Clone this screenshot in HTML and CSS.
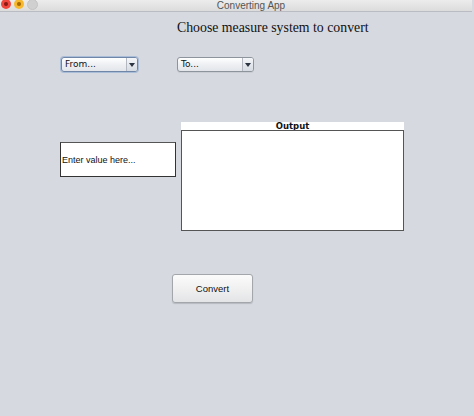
FILE: index.html
```html
<!DOCTYPE html>
<html>
<head>
<meta charset="utf-8">
<link rel="stylesheet" href="styles.css">
</head>
<body>
<div class="window">
  <div class="titlebar">
    <div class="lights">
      <span class="light red"></span>
      <span class="light yellow"></span>
      <span class="light gray"></span>
    </div>
    <div class="wtitle">Converting App</div>
  </div>
  <div class="content">
    <h1 class="heading">Choose measure system to convert</h1>
    <div class="combos">
      <div class="combo focused"><span class="clabel">From...</span><span class="carrow"></span></div>
      <div class="combo"><span class="clabel">To...</span><span class="carrow"></span></div>
    </div>
    <div class="middle">
      <div class="input">Enter value here...</div>
      <div class="output">
        <div class="olabel">Output</div>
        <div class="obox"></div>
      </div>
    </div>
    <div class="btnrow">
      <div class="button">Convert</div>
    </div>
  </div>
</div>
</body>
</html>
```
FILE: styles.css
```css
html, body {
  margin: 0;
  padding: 0;
  background: #d6d9e0;
  width: 474px;
  height: 416px;
  overflow: hidden;
}
.window {
  width: 472px;
  height: 416px;
  background: #d6d9e0;
}
.titlebar {
  height: 11px;
  border-bottom: 1px solid #b9bcc2;
  background: linear-gradient(#ececec, #dcdcdc);
  position: relative;
  display: flex;
  justify-content: center;
  align-items: center;
}
.lights {
  position: absolute;
  left: 1px;
  top: -1px;
  display: flex;
  gap: 3px;
}
.light {
  width: 10px;
  height: 10px;
  border-radius: 50%;
  display: block;
}
.red { background: radial-gradient(circle at 50% 50%, #8b1a14 0 1.5px, #f0463e 2.5px); }
.yellow { background: radial-gradient(circle at 50% 50%, #a66a00 0 1.5px, #f7b82d 2.5px); }
.gray { background: #d0d0d0; border: 1px solid #c4c4c4; width: 9px; height: 9px; }
.wtitle {
  font-family: "Liberation Sans", Arial, sans-serif;
  font-size: 10px;
  color: #555;
  margin-left: 30px;
  line-height: 11px;
}
.content {
  display: flex;
  flex-direction: column;
}
.heading {
  margin: 6px 0 0 177px;
  font-family: "Liberation Serif", "Times New Roman", serif;
  font-weight: normal;
  font-size: 13.8px;
  line-height: 20px;
  color: #111;
}
.combos {
  display: flex;
  gap: 39px;
  margin: 19px 0 0 61px;
}
.combo {
  width: 75px;
  height: 13px;
  border: 1px solid #8e949c;
  border-radius: 3px;
  background: linear-gradient(#ffffff, #eef0f3 50%, #e2e5ea);
  display: flex;
  align-items: center;
  box-shadow: 0 1px 0 rgba(0,0,0,0.06);
}
.combo.focused {
  border-color: #6f86a8;
  box-shadow: 0 0 0 1px #a9bcd8;
}
.clabel {
  flex: 1;
  font-family: "DejaVu Sans", sans-serif;
  font-size: 9px;
  color: #111;
  padding-left: 3px;
  line-height: 13px;
}
.carrow {
  width: 10px;
  height: 13px;
  border-left: 1px solid #b4b9c1;
  background: linear-gradient(#f4f6f9, #d6dbe3);
  border-radius: 0 2px 2px 0;
  position: relative;
}
.carrow::after {
  content: "";
  position: absolute;
  left: 2px;
  top: 5px;
  border-left: 3px solid transparent;
  border-right: 3px solid transparent;
  border-top: 4px solid #2b3440;
}
.middle {
  display: flex;
  align-items: flex-start;
  margin: 50px 0 0 60px;
  gap: 5px;
}
.input {
  margin-top: 20px;
  width: 113px;
  height: 33px;
  border: 1px solid #333;
  border-top-color: #555;
  background: #fff;
  font-family: "Liberation Sans", Arial, sans-serif;
  font-size: 9px;
  color: #111;
  padding-left: 1px;
  display: flex;
  align-items: center;
}
.output {
  width: 223px;
  display: flex;
  flex-direction: column;
}
.olabel {
  height: 8px;
  background: #fff;
  font-family: "DejaVu Sans", sans-serif;
  font-weight: bold;
  font-size: 8.5px;
  line-height: 8px;
  text-align: center;
  color: #111;
}
.obox {
  height: 99px;
  border: 1px solid #555;
  background: #fff;
}
.btnrow {
  display: flex;
  margin: 43px 0 0 172px;
}
.button {
  width: 79px;
  height: 27px;
  border: 1px solid #a3a6ab;
  border-radius: 3px;
  background: linear-gradient(#fbfbfb, #eeeeef 60%, #e3e4e6);
  box-shadow: 0 1px 1px rgba(0,0,0,0.15);
  font-family: "Liberation Sans", Arial, sans-serif;
  font-size: 9.5px;
  color: #111;
  display: flex;
  align-items: center;
  justify-content: center;
}
```
